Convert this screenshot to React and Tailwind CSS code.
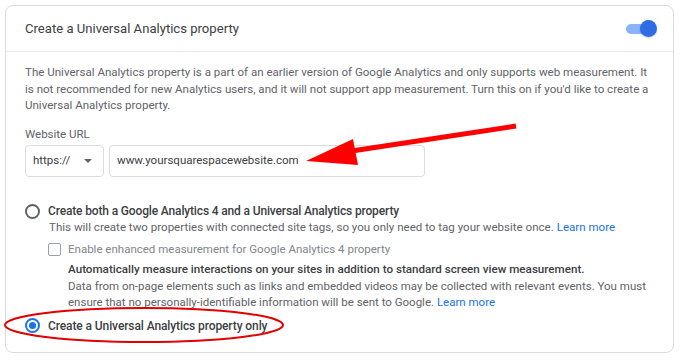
import React from "react";

function Radio({ checked }) {
  return checked ? (
    <span className="flex h-[15px] w-[15px] shrink-0 items-center justify-center rounded-full border-2 border-[#1a73e8]">
      <span className="h-[7px] w-[7px] rounded-full bg-[#1a73e8]" />
    </span>
  ) : (
    <span className="block h-[15px] w-[15px] shrink-0 rounded-full border-2 border-[#5f6368]" />
  );
}

export default function App() {
  return (
    <div className="relative h-[361px] w-[680px] overflow-hidden bg-white font-['Roboto',sans-serif]">
      <div className="ml-[5px] mt-[5px] h-[348px] w-[669px] rounded-[8px] border border-[#dadce0] bg-white">
        <div className="flex h-[46px] items-center justify-between border-b border-[#e8eaed] pl-[19px] pr-[16px]">
          <div className="text-[13.1px] text-[#3c4043]">Create a Universal Analytics property</div>
          <div className="relative flex h-[17px] w-[31px] items-center">
            <div className="h-[10px] w-[24px] rounded-full bg-[#8ab4f8]" />
            <div className="absolute right-0 top-0 h-[17px] w-[17px] rounded-full bg-[#2f6de6] shadow-[0_1px_2px_rgba(0,0,0,0.2)]" />
          </div>
        </div>
        <div className="pl-[19px] pr-[10px] pt-[12px]">
          <p className="whitespace-nowrap text-[11.55px] leading-[16.5px] text-[#5f6368]">
            The Universal Analytics property is a part of an earlier version of Google Analytics and only supports web measurement. It
            <br />
            is not recommended for new Analytics users, and it will not support app measurement. Turn this on if you'd like to create a
            <br />
            Universal Analytics property.
          </p>
          <div className="mt-[12.5px] text-[11.5px] leading-[16px] text-[#5f6368]">Website URL</div>
          <div className="mt-[3px] flex gap-[5px]">
            <div className="flex h-[32px] w-[79px] items-center justify-between rounded-[4px] border border-[#dadce0] pl-[7px] pr-[11px] text-[11.5px] text-[#3c4043]">
              <span>https://</span>
              <span className="h-0 w-0 border-x-[4.5px] border-t-[4.5px] border-x-transparent border-t-[#5f6368]" />
            </div>
            <div className="flex h-[32px] w-[316px] items-center rounded-[4px] border border-[#dadce0] pl-[7px] text-[11.5px] text-[#3c4043]">
              www.yoursquarespacewebsite.com
            </div>
          </div>
          <div className="mt-[26px] flex items-center gap-[8px]">
            <Radio />
            <span className="whitespace-nowrap text-[12px] font-medium leading-[16px] tracking-[-0.15px] text-[#3c4043]">
              Create both a Google Analytics 4 and a Universal Analytics property
            </span>
          </div>
          <div className="whitespace-nowrap pl-[24px] text-[11.55px] leading-[16px] text-[#5f6368]">
            This will create two properties with connected site tags, so you only need to tag your website once.{" "}
            <span className="text-[#1a73e8]">Learn more</span>
          </div>
          <div className="mt-[6px] flex items-center gap-[7px] pl-[23px]">
            <span className="block h-[13px] w-[13px] rounded-[2px] border-[1.5px] border-[#9aa0a6]" />
            <span className="whitespace-nowrap text-[11.5px] leading-[16px] text-[#80868b]">
              Enable enhanced measurement for Google Analytics 4 property
            </span>
          </div>
          <div className="mt-[4px] whitespace-nowrap pl-[43px] text-[11.5px] leading-[16.5px] text-[#5f6368]">
            <div className="text-[11.65px] font-medium text-[#3c4043]">
              Automatically measure interactions on your sites in addition to standard screen view measurement.
            </div>
            <div>
              Data from on-page elements such as links and embedded videos may be collected with relevant events. You must
              <br />
              ensure that no personally-identifiable information will be sent to Google.{" "}
              <span className="text-[#1a73e8]">Learn more</span>
            </div>
          </div>
          <div className="mt-[7px] flex items-center gap-[8px]">
            <Radio checked />
            <span className="whitespace-nowrap text-[12px] font-medium leading-[16px] tracking-[-0.1px] text-[#3c4043]">
              Create a Universal Analytics property only
            </span>
          </div>
        </div>
      </div>
      <svg className="pointer-events-none absolute left-0 top-0" width="680" height="361" viewBox="0 0 680 361">
        <line x1="516" y1="126" x2="345" y2="152" stroke="#ff0000" strokeWidth="5" />
        <polygon points="306,161 353,139 358,165" fill="#ff0000" />
        <ellipse cx="144" cy="325" rx="139" ry="17" fill="none" stroke="#e30000" strokeWidth="2" />
      </svg>
    </div>
  );
}
